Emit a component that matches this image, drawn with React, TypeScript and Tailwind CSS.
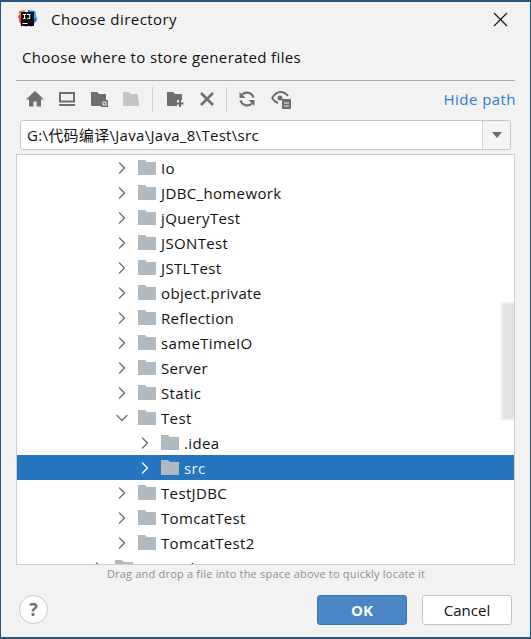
import { ChevronDown, ChevronRight, X } from 'lucide-react';

const font = "font-['Open_Sans','Noto_Sans_CJK_SC',sans-serif]";

const rows = [
  { name: 'Io', depth: 0 },
  { name: 'JDBC_homework', depth: 0 },
  { name: 'jQueryTest', depth: 0 },
  { name: 'JSONTest', depth: 0 },
  { name: 'JSTLTest', depth: 0 },
  { name: 'object.private', depth: 0 },
  { name: 'Reflection', depth: 0 },
  { name: 'sameTimeIO', depth: 0 },
  { name: 'Server', depth: 0 },
  { name: 'Static', depth: 0 },
  { name: 'Test', depth: 0, open: true },
  { name: '.idea', depth: 1 },
  { name: 'src', depth: 1, selected: true },
  { name: 'TestJDBC', depth: 0 },
  { name: 'TomcatTest', depth: 0 },
  { name: 'TomcatTest2', depth: 0 },
  { name: 'JavaWeb', depth: -1 },
];

function Folder() {
  return (
    <svg width="18" height="15" viewBox="0 0 18 15" className="shrink-0">
      <path d="M0 0h7l2 2h9v13H0z" fill="#b0b9c0" />
    </svg>
  );
}

function ToolIcon({ children, className = '' }: { children: React.ReactNode; className?: string }) {
  return (
    <div className={`w-[32px] flex justify-center shrink-0 ${className}`}>
      <svg width="20" height="20" viewBox="0 0 20 20">
        {children}
      </svg>
    </div>
  );
}

function Divider({ className }: { className: string }) {
  return <div className={`w-px h-[25px] bg-[#cfcfcf] shrink-0 ${className}`} />;
}

export default function App() {
  return (
    <div className={`${font} w-[531px] h-[639px] bg-[#f2f2f2] border-x border-b-2 border-t-2 border-[#2a5578] flex flex-col text-[15px] text-[#111] overflow-hidden`}>
      {/* Title bar */}
      <div className="h-[34px] shrink-0 flex items-center pl-[15px] pr-[17px]">
        <svg width="22" height="22" viewBox="0 0 22 22" className="shrink-0">
          <path d="M3 3l6-1 1 10-7 3z" fill="#fc801d" />
          <path d="M2 8l6-2 3 13-6-2z" fill="#fe315d" />
          <path d="M12 2l7 1 2 9-6 7-4-4z" fill="#087cfa" />
          <path d="M14 3l5 1 1 6-5 2z" fill="#07c3f2" />
          <rect x="5" y="4" width="13" height="14" fill="#0a0a0a" />
          <rect x="6.500" y="15" width="5" height="1" fill="#fff" />
          <path d="M7 6h3v.9h-1v3.300h1v.9H7v-.9h1V6.900H7zM11 6h3.200v4.200q0 .9-1.600.9-1.100 0-1.600-.6l.5-.7q.5.4 1 .4.700 0 .700-.5V6.900H11z" fill="#fff" />
        </svg>
        <span className="ml-[13px] text-[15px] tracking-[0.45px]">Choose directory</span>
        <X className="ml-auto w-[25px] h-[25px] text-[#111]" strokeWidth={1.1} />
      </div>

      {/* Prompt */}
      <div className="h-[42px] shrink-0 pl-[21px] flex items-center text-[15px] tracking-[0.36px]">
        Choose where to store generated files
      </div>

      <div className="mx-[15px] h-px bg-[#a8a8a8] shrink-0 mt-[2px]" />

      {/* Toolbar */}
      <div className="h-[36px] shrink-0 flex items-center pl-[18px] pr-[14px] mb-[3px]">
        <ToolIcon>
          <path d="M10 2L1 10.500H4V17.500h4.500v-5h3v5H16v-7h3z" fill="#6e6e6e" />
        </ToolIcon>
        <ToolIcon>
          <path d="M3 4h14v8.500H3z" fill="none" stroke="#6e6e6e" strokeWidth="2" />
          <rect x="2" y="15" width="16" height="2" fill="#6e6e6e" />
        </ToolIcon>
        <ToolIcon>
          <path d="M2 3h6l2 2h7v6h-5v6H2z" fill="#6e6e6e" />
          <rect x="12.750" y="11.750" width="5.500" height="5.500" fill="none" stroke="#6e6e6e" strokeWidth="1.500" />
          <rect x="14.500" y="13.500" width="2" height="2" fill="#6e6e6e" />
        </ToolIcon>
        <ToolIcon>
          <path d="M2 3h6l2 2h7v6h-5v6H2z" fill="#c4c4c4" />
          <rect x="12" y="11" width="6" height="6" fill="#c4c4c4" />
        </ToolIcon>
        <Divider className="ml-[5px]" />
        <ToolIcon className="ml-[6px]">
          <path d="M2 3h6l2 2h7v6h-5v6H2z" fill="#6e6e6e" />
          <path d="M15 11v7M11.500 14.500h7" stroke="#6e6e6e" strokeWidth="2" />
        </ToolIcon>
        <ToolIcon>
          <path d="M4 4l12 12M16 4L4 16" stroke="#6e6e6e" strokeWidth="2.600" />
        </ToolIcon>
        <Divider className="ml-[3px]" />
        <ToolIcon className="ml-[4px]">
          <path d="M16.500 8.500A7 7 0 0 0 5 5.500" fill="none" stroke="#6e6e6e" strokeWidth="2.200" />
          <path d="M2.500 3v6h6z" fill="#6e6e6e" />
          <path d="M3.500 11.500A7 7 0 0 0 15 14.500" fill="none" stroke="#6e6e6e" strokeWidth="2.200" />
          <path d="M17.500 17v-6h-6z" fill="#6e6e6e" />
        </ToolIcon>
        <ToolIcon className="ml-[2px]">
          <path d="M1 9q4-6 8.500-6T17 7" fill="none" stroke="#6e6e6e" strokeWidth="2" />
          <path d="M1 9q2 3.500 6 5" fill="none" stroke="#6e6e6e" strokeWidth="2" />
          <circle cx="9" cy="9" r="2.500" fill="#6e6e6e" />
          <rect x="11" y="10" width="9" height="10" fill="#6e6e6e" />
          <path d="M13 14h5M13 17h5" stroke="#f2f2f2" />
        </ToolIcon>
        <span className="ml-auto text-[15px] text-[#2f7dd0] tracking-[0.45px]">Hide path</span>
      </div>

      {/* Path combo */}
      <div className="mx-[19px] h-[30px] shrink-0 flex bg-white border border-[#c4c4c4] rounded-[3px]">
        <div className="flex-1 flex items-center pl-[6px] text-[15px] tracking-[0.3px]">G:\代码编译\Java\Java_8\Test\src</div>
        <div className="w-[28px] bg-[#f5f5f5] border-l border-[#d4d4d4] rounded-r-[3px] flex items-center justify-center">
          <svg width="10" height="6" viewBox="0 0 10 6"><path d="M0 0h10L5 6z" fill="#6e6e6e" /></svg>
        </div>
      </div>

      {/* Tree */}
      <div className="relative mx-[15px] mt-[4px] h-[411px] shrink-0 bg-white border border-[#cdcdcd] overflow-hidden">
        {rows.map(row => (
          <div
            key={row.name}
            className={`h-[25px] flex items-center ${row.selected ? 'bg-[#2675bf] text-white' : ''} ${row.depth === 1 ? 'pl-[118px]' : row.depth === 0 ? 'pl-[95px]' : 'pl-[72px]'}`}
          >
            {row.open ? (
              <ChevronDown className="w-[20px] h-[20px] text-[#6e6e6e] shrink-0" strokeWidth={1.6} />
            ) : (
              <ChevronRight className={`w-[20px] h-[20px] shrink-0 ${row.selected ? 'text-white' : 'text-[#6e6e6e]'}`} strokeWidth={1.6} />
            )}
            <div className="ml-[6px]"><Folder /></div>
            <span className={`ml-[5px] pt-[1px] text-[15px] leading-[20px] tracking-[0.36px] ${row.selected ? 'text-[#eef4fa]' : ''}`}>{row.name}</span>
          </div>
        ))}
        <div className="absolute right-0 top-[147px] w-[13px] h-[118px] bg-[#e2e2e2] border-2 border-r-0 border-[#ececec]" />
      </div>

      {/* Hint */}
      <div className="h-[18px] shrink-0 flex items-center justify-center pl-[1px] text-[11px] text-[#8f8f8f] tracking-[0.2px]">
        Drag and drop a file into the space above to quickly locate it
      </div>

      {/* Footer */}
      <div className="flex-1 flex items-start pt-[12px] pl-[18px] pr-[18px]">
        <div className="w-[29px] h-[29px] rounded-full bg-white border border-[#c8c8c8] flex items-center justify-center text-[18px] font-bold text-[#6e6e6e]">?</div>
        <button className="ml-auto w-[90px] h-[30px] rounded-[3px] bg-[#4a86c5] border border-[#3d77b5] text-white font-bold text-[15px]">OK</button>
        <button className="ml-[15px] w-[90px] h-[30px] rounded-[3px] bg-white border border-[#c4c4c4] text-[15px]">Cancel</button>
      </div>
    </div>
  );
}
